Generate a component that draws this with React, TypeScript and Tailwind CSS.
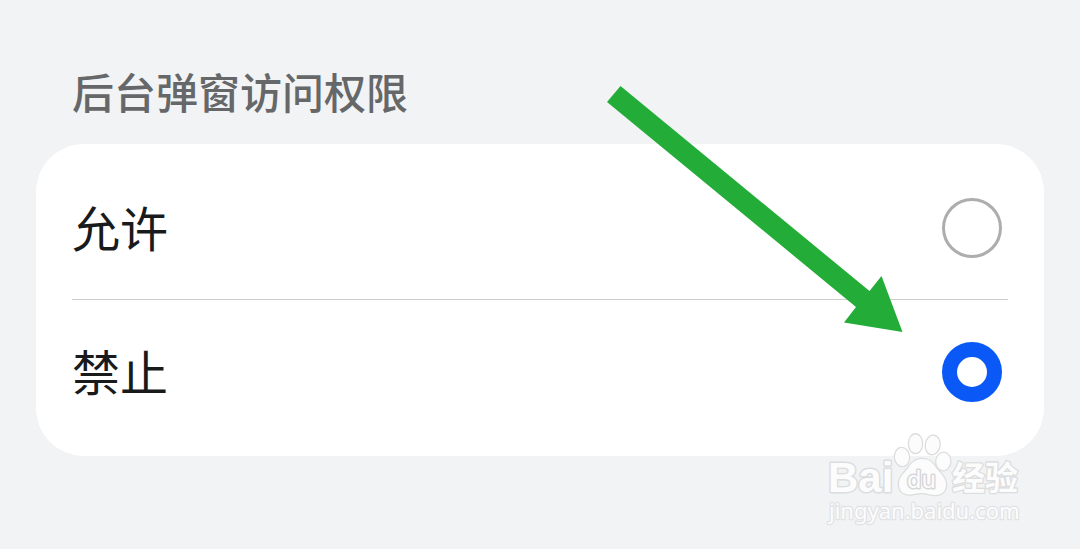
import { useState } from "react";

const OPTIONS = [
  { value: "allow", label: "允许" },
  { value: "deny", label: "禁止" },
];

function Arrow() {
  return (
    <svg
      className="pointer-events-none absolute -top-[59px] right-[141px] h-[248px] w-[296px]"
      viewBox="607 85 296 248"
      aria-hidden="true"
    >
      <path d="M620.5 86 L869.5 291 L881.5 276 L902.5 332 L844 322.500 L856 307 L607 102 Z" fill="#23ad38" />
    </svg>
  );
}

function Watermark() {
  return (
    <svg
      className="pointer-events-none absolute right-[50px] bottom-[19px] h-[100px] w-[210px]"
      viewBox="820 430 210 100"
      role="img"
      aria-label="Baidu 经验"
    >
      <g fill="#fcfcfd" stroke="#dcdddd" strokeLinejoin="round" paintOrder="stroke">
        <g strokeWidth="2.600">
          <ellipse cx="902" cy="457" rx="7" ry="9" transform="rotate(-6 902 457)" />
          <ellipse cx="915.500" cy="443.700" rx="6.500" ry="9.300" />
          <ellipse cx="932.700" cy="445" rx="6.800" ry="9.200" transform="rotate(8 932.700 445)" />
          <ellipse cx="943.300" cy="461.500" rx="7" ry="8.700" transform="rotate(4 943.300 461.500)" />
          <path d="M922 459 C915 459 911 463.500 908.500 467.500 C905.500 472.500 899 476 899 484 C899 491 903.500 495 910 494.500 C915 494 918 493 922 493 C927 493 930 495 935 495 C942 495 946 491 946 484.500 C946 476.500 939 472.500 935.500 467 C932.500 462.500 929 459 922 459 Z" />
        </g>
        <text x="828" y="492" fontFamily="'Liberation Sans', Arial, sans-serif" fontWeight="700" fontSize="42" strokeWidth="3">
          Bai
        </text>
        <text x="907" y="488" fontFamily="'DejaVu Sans', sans-serif" fontSize="23" stroke="#d6d7d8" strokeWidth="3">
          du
        </text>
        <text x="952" y="490" fontFamily="'Noto Sans CJK SC', sans-serif" fontWeight="700" fontSize="33" strokeWidth="2.600">
          经验
        </text>
        <text x="829" y="519" fontFamily="'Noto Sans', sans-serif" fontSize="22" stroke="#e1e2e3" strokeWidth="2.400">
          jingyan.baidu.com
        </text>
      </g>
    </svg>
  );
}

export default function App() {
  const [selected, setSelected] = useState("deny");

  return (
    <main className="relative min-h-screen bg-[#f1f3f5] px-9 pt-[61px] pb-[93px] font-['Noto_Sans_CJK_SC',sans-serif]">
      <h1 id="permission-title" className="px-9 pb-[23px] text-[42px] leading-[60px] font-medium text-[#666768]">
        后台弹窗访问权限
      </h1>
      <div
        role="radiogroup"
        aria-labelledby="permission-title"
        className="relative rounded-[48px] bg-white px-9 py-3"
      >
        {OPTIONS.map((option) => (
          <label
            key={option.value}
            className="flex h-36 cursor-pointer items-center justify-between border-b border-[#cccccc] pr-1.5 last-of-type:border-transparent"
          >
            <span className="pb-1 text-5xl text-[#191a1b]">{option.label}</span>
            <input
              type="radio"
              name="permission"
              value={option.value}
              checked={selected === option.value}
              onChange={() => setSelected(option.value)}
              className="size-[60px] cursor-pointer appearance-none rounded-full border-3 border-[#adadad] bg-white checked:border-[15px] checked:border-[#0a59f7]"
            />
          </label>
        ))}
        <Arrow />
      </div>
      <Watermark />
    </main>
  );
}
